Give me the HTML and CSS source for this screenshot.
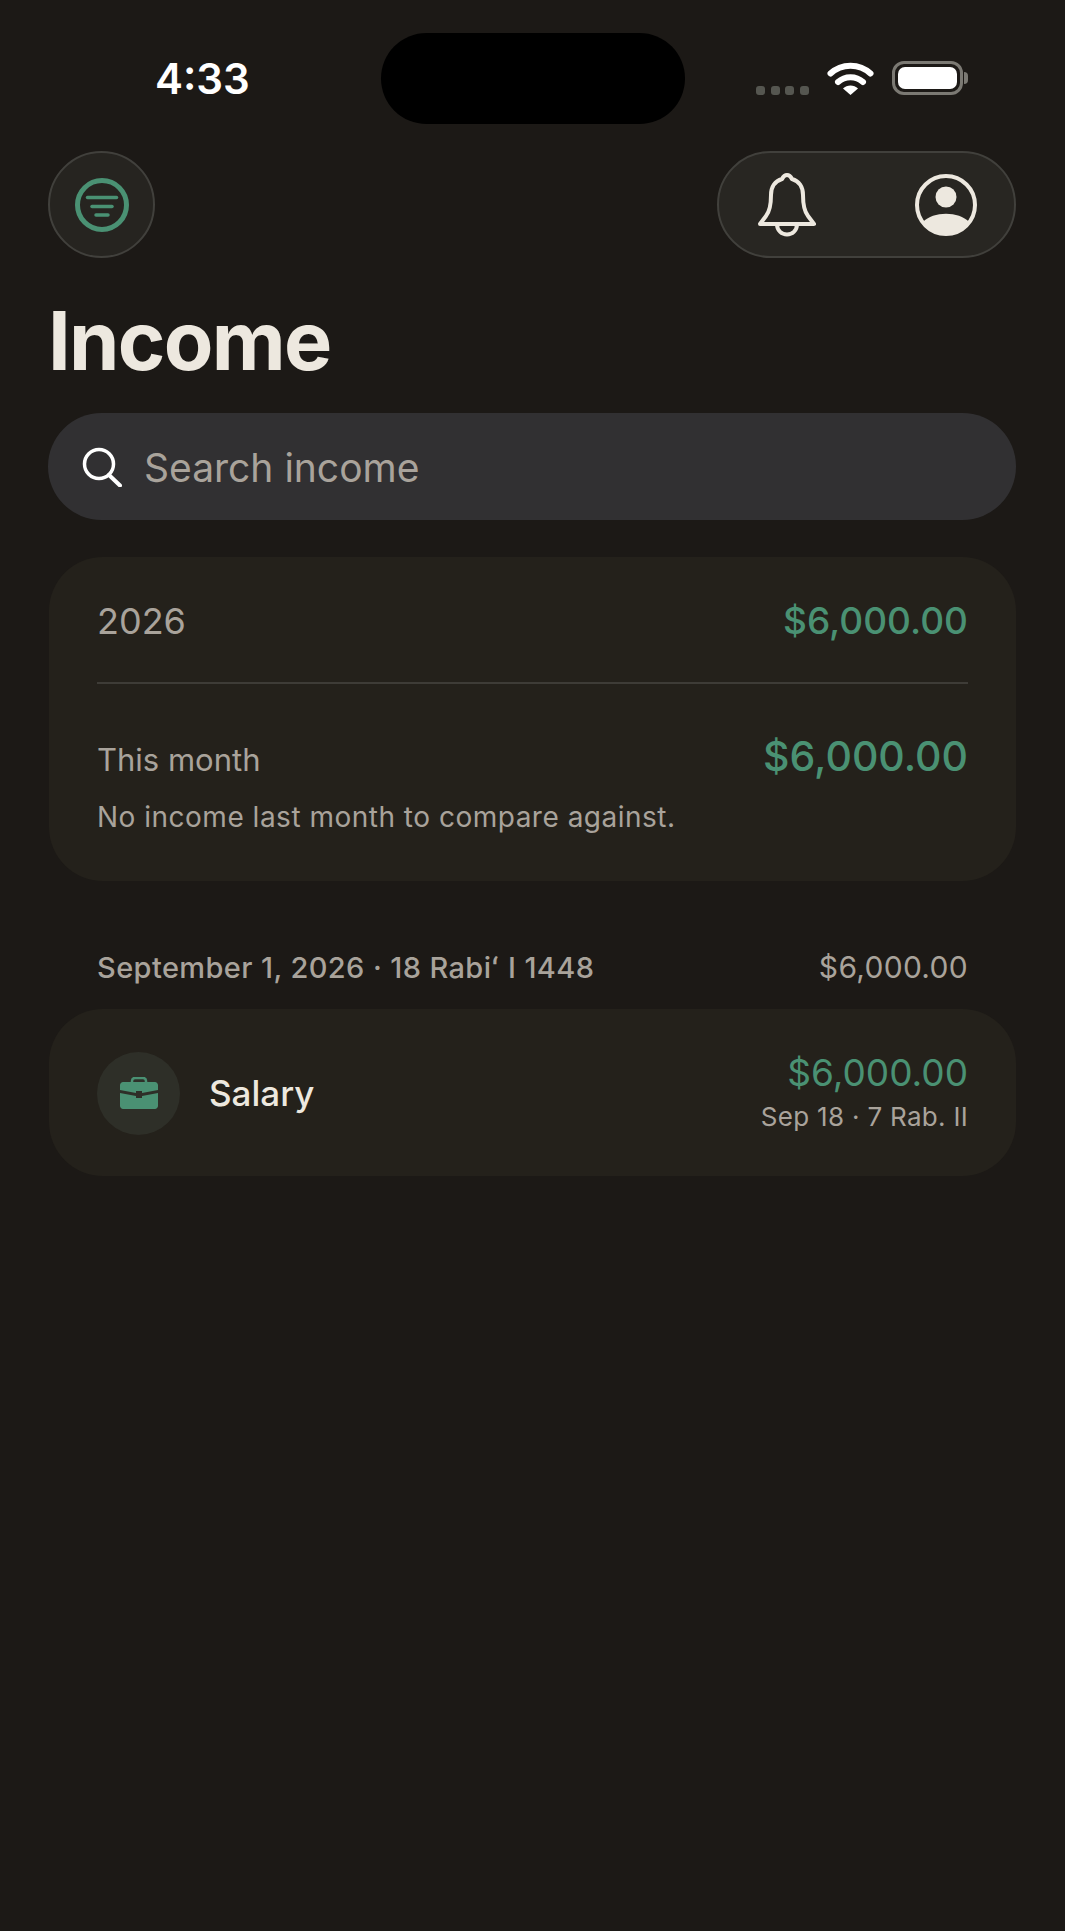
FILE: index.html
```html
<!DOCTYPE html>
<html>
<head lang="en">
	<meta charset="UTF-8">
	<title>Income</title>
	<link rel="stylesheet" href="styles.css">
</head>
<body>
	<div class="status_bar">
		<span class="time">4:33</span>
		<div class="island"></div>
		<div class="status_icons">
			<div class="signal"><i></i><i></i><i></i><i></i></div>
			<svg class="wifi" width="47" height="34" viewBox="0 0 47 34">
				<path d="M3.500 12.500C14.500 2 32.500 2 43.500 12.500" fill="none" stroke="#fff" stroke-width="6" stroke-linecap="round"/>
				<path d="M11 21C18 14.500 29 14.500 36 21" fill="none" stroke="#fff" stroke-width="6" stroke-linecap="round"/>
				<path d="M16 27.500C20 23.500 27 23.500 31 27.500L23.500 34Z" fill="#fff"/>
			</svg>
			<div class="battery"><div class="battery_fill"></div></div>
			<div class="battery_tip"></div>
		</div>
	</div>

	<div class="top_row">
		<div class="round_btn">
			<svg width="54" height="54" viewBox="0 0 54 54" fill="none" stroke="#4A9173" stroke-linecap="round">
				<circle cx="27" cy="27" r="24.500" stroke-width="5"/>
				<path d="M12.500 19.500H41.500" stroke-width="3.500"/>
				<path d="M17 28.500H37" stroke-width="3.500"/>
				<path d="M21 37H33" stroke-width="3.500"/>
			</svg>
		</div>
		<div class="pill_btn">
			<svg width="58" height="64" viewBox="0 0 58 64" fill="none" stroke="#EDE8DF" stroke-width="4" stroke-linejoin="round">
				<path d="M29 2C32 2 33 4 34 6C41 8 45 14 45 22C45 32 46 38 50 43L56 51H2L8 43C12 38 13 32 13 22C13 14 17 8 24 6C25 4 26 2 29 2Z"/>
				<path d="M19 51C19 65 39 65 39 51"/>
			</svg>
			<svg width="62" height="62" viewBox="0 0 62 62">
				<circle cx="31" cy="31" r="29" fill="none" stroke="#EDE8DF" stroke-width="4"/>
				<circle cx="31" cy="23" r="10.500" fill="#EDE8DF"/>
				<path d="M8 48C18 37 44 37 54 48C48 56 40 60 31 60C22 60 14 56 8 48Z" fill="#EDE8DF"/>
			</svg>
		</div>
	</div>

	<h1>Income</h1>

	<div class="search">
		<svg width="40" height="40" viewBox="0 0 40 40" fill="none" stroke="#fff" stroke-linecap="round">
			<circle cx="17" cy="17" r="14.500" stroke-width="3.500"/>
			<path d="M27 28L38 38.500" stroke-width="4"/>
		</svg>
		<span class="search_text">Search income</span>
	</div>

	<div class="card summary">
		<div class="year_row">
			<span class="year">2026</span>
			<span class="green year_money">$6,000.00</span>
		</div>
		<div class="line"></div>
		<div class="month_row">
			<span class="month">This month</span>
			<span class="green month_money">$6,000.00</span>
		</div>
		<div class="note">No income last month to compare against.</div>
	</div>

	<div class="day_row">
		<span>September 1, 2026 · 18 Rabiʻ I 1448</span>
		<span class="day_money">$6,000.00</span>
	</div>

	<div class="card item">
		<div class="item_icon">
			<svg width="38" height="32" viewBox="0 0 38 32">
				<path d="M12 6V4C12 2 13.500 1 15 1H23C24.500 1 26 2 26 4V6" fill="none" stroke="#4A9173" stroke-width="2.500"/>
				<path d="M3 5H35C36.500 5 38 6.500 38 8V13L22 16V14H16V16L0 13V8C0 6.500 1.500 5 3 5Z" fill="#4A9173"/>
				<path d="M0 16L16 19V21H22V19L38 16V29C38 30.500 36.500 32 35 32H3C1.500 32 0 30.500 0 29Z" fill="#4A9173"/>
			</svg>
		</div>
		<span class="item_name">Salary</span>
		<div class="item_right">
			<div class="green item_money">$6,000.00</div>
			<div class="item_date">Sep 18 · 7 Rab. II</div>
		</div>
	</div>
</body>
</html>
```

FILE: styles.css
```css
*{
	margin:0;
	padding:0;
	box-sizing:border-box;
}
body{
	background:#1C1916;
	min-height:1931px;
	padding:33px 49px 0 48px;
	font-family:Inter, "Liberation Sans", sans-serif;
	color:#EDE8DF;
	overflow:hidden;
}
.green{
	color:#4A9173;
}
.status_bar{
	display:flex;
	align-items:flex-start;
	height:91px;
	margin-right:-1px;
}
.time{
	width:333px;
	padding-left:107px;
	font-size:42px;
	line-height:46px;
	margin-top:23px;
	font-weight:600;
	color:#fff;
}
.island{
	width:304px;
	height:91px;
	background:#000;
	border-radius:46px;
}
.status_icons{
	display:flex;
	align-items:center;
	margin-left:71px;
	margin-top:28px;
}
.signal{
	display:flex;
	gap:5.600px;
	margin-top:25px;
	margin-right:18px;
}
.signal i{
	width:9px;
	height:9px;
	border-radius:3px;
	background:#555650;
}
.battery{
	width:71px;
	height:34px;
	margin-left:18px;
	border:3px solid #7B7973;
	border-radius:12px;
	padding:3px;
}
.battery_fill{
	height:100%;
	background:#fff;
	border-radius:7px;
}
.battery_tip{
	width:4px;
	height:12px;
	margin-left:1px;
	background:#7B7973;
	border-radius:0 4px 4px 0;
}
.top_row{
	display:flex;
	justify-content:space-between;
	margin-top:27px;
}
.round_btn{
	width:107px;
	height:107px;
	display:flex;
	align-items:center;
	justify-content:center;
	background:#262420;
	border:2px solid #41403C;
	border-radius:50%;
}
.pill_btn{
	width:299px;
	height:107px;
	display:flex;
	align-items:center;
	justify-content:space-between;
	padding:0 37px 0 39px;
	background:#282622;
	border:2px solid #41403C;
	border-radius:54px;
}
h1{
	font-size:81px;
	line-height:98px;
	font-weight:700;
	letter-spacing:-1.700px;
	margin-top:34px;
	color:#EDE8DF;
}
.search{
	height:107px;
	margin-top:23px;
	display:flex;
	align-items:center;
	gap:22px;
	padding-left:34px;
	background:#313032;
	border-radius:54px;
	font-size:39px;
	color:#A9A39B;
}
.search_text{
	padding-top:2px;
}
.card{
	background:#24211B;
	margin-left:1px;
}
.summary{
	margin-top:37px;
	height:324px;
	padding:0 48px;
	border-radius:54px;
}
.year_row{
	display:flex;
	justify-content:space-between;
	align-items:center;
	height:125px;
	padding-top:2px;
}
.year{
	font-size:36px;
	color:#A9A39B;
}
.year_money{
	font-size:37px;
	font-weight:500;
}
.line{
	height:2px;
	background:#3E3C37;
}
.month_row{
	display:flex;
	justify-content:space-between;
	align-items:center;
	height:70px;
	margin-top:37px;
}
.month{
	font-size:31px;
	color:#A9A39B;
	margin-top:6px;
}
.month_money{
	font-size:41px;
	font-weight:500;
}
.note{
	font-size:28px;
	line-height:34px;
	letter-spacing:0.500px;
	margin-top:9px;
	color:#A9A39B;
}
.day_row{
	display:flex;
	justify-content:space-between;
	align-items:center;
	height:34px;
	margin-top:69px;
	padding:0 48px 0 49px;
	font-size:29px;
	letter-spacing:0.400px;
	font-weight:500;
	color:#A9A39B;
}
.day_money{
	font-weight:400;
	font-size:30px;
	letter-spacing:0.300px;
}
.item{
	display:flex;
	align-items:center;
	height:167px;
	margin-top:25px;
	padding:1px 48px 0 48px;
	border-radius:54px;
}
.item_icon{
	width:83px;
	height:83px;
	display:flex;
	align-items:center;
	justify-content:center;
	background:#2E2F28;
	border-radius:50%;
}
.item_name{
	font-size:35px;
	font-weight:500;
	margin-left:29px;
}
.item_right{
	margin-left:auto;
	text-align:right;
}
.item_money{
	font-size:37px;
	line-height:42px;
}
.item_date{
	font-size:26px;
	letter-spacing:0.300px;
	line-height:34px;
	margin-top:6px;
	color:#A9A39B;
}
```
